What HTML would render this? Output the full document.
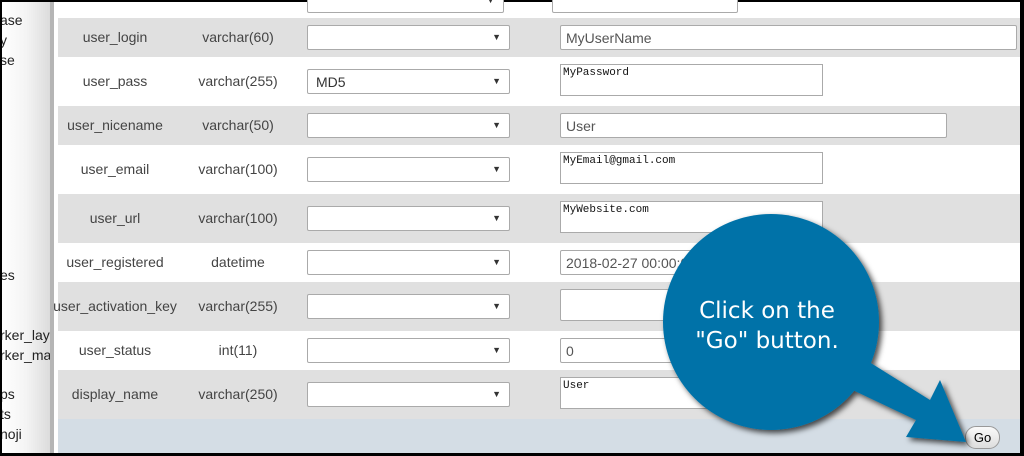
<!DOCTYPE html>
<html><head><style>
*{margin:0;padding:0;box-sizing:border-box}
body{width:1024px;height:456px;overflow:hidden;background:#000;position:relative;font-family:"Liberation Sans",Arial,sans-serif;font-size:14px;color:#444}
.a{position:absolute}
.side{left:2px;top:2px;width:48px;height:451px;background:linear-gradient(90deg,#fff 0%,#f4f4f4 50%,#dcdcdc 100%);overflow:hidden;font-size:14px;color:#222}
.side div{position:absolute;white-space:nowrap}
.bar{left:50px;top:2px;width:4px;height:451px;background:#b5b5b5}
.gap{left:54px;top:2px;width:4px;height:451px;background:#fff}
.main{left:58px;top:2px;width:962px;height:451px;background:#fff}
.row{position:absolute;left:58px;width:962px}
.g{background:#e0e0e0}
.lbl{position:absolute;width:120px;text-align:center;left:55px;color:#444}
.typ{position:absolute;width:120px;text-align:center;left:178px;color:#444}
.sel{position:absolute;left:307px;width:203px;height:25px;background:#fff;border:1px solid #aaa;border-radius:2px;font-size:14px;padding:4px 8px;color:#333}
.sel:after{content:"▼";position:absolute;right:8px;top:6px;font-size:9px;color:#333}
.in{position:absolute;left:560px;height:25px;background:#fff;border:1px solid #aaa;border-radius:2px;font-size:14px;padding:4px 5px;color:#555}
.ta{position:absolute;left:560px;width:263px;height:32px;background:#fff;border:1px solid #aaa;font-family:"Liberation Mono","DejaVu Sans Mono",monospace;font-size:11px;padding:2px 2px;color:#111}
.foot{left:58px;top:419px;width:962px;height:34px;background:#d4dde5}
.go{left:965px;top:426px;width:35px;height:23px;border:1px solid #999;border-radius:11px;background:linear-gradient(#fafafa,#ddd);font-size:13px;color:#000;text-align:center;line-height:21px}
</style></head><body>
<div class="a side">
<div style="left:-2px;top:10px">ase</div>
<div style="left:-2px;top:30px">y</div>
<div style="left:-2px;top:50px">se</div>
<div style="left:-2px;top:265px">es</div>
<div style="left:-2px;top:325px">rker_laye</div>
<div style="left:-2px;top:345px">rker_ma</div>
<div style="left:-2px;top:384px">ps</div>
<div style="left:-2px;top:404px">ts</div>
<div style="left:-2px;top:424px">noji</div>
</div>
<div class="a bar"></div><div class="a gap"></div>
<div class="a main"></div>
<div class="a sel" style="top:-12px;width:197px"></div>
<div class="a in" style="top:-12px;left:552px;width:186px"></div>

<div class="row g" style="top:18px;height:39px"></div>
<div class="lbl" style="top:29px">user_login</div><div class="typ" style="top:29px">varchar(60)</div>
<div class="sel" style="top:25px"></div><div class="in" style="top:25px;width:457px">MyUserName</div>

<div class="lbl" style="top:73px">user_pass</div><div class="typ" style="top:73px">varchar(255)</div>
<div class="sel" style="top:69px">MD5</div><div class="ta" style="top:64px">MyPassword</div>

<div class="row g" style="top:106px;height:39px"></div>
<div class="lbl" style="top:117px">user_nicename</div><div class="typ" style="top:117px">varchar(50)</div>
<div class="sel" style="top:113px"></div><div class="in" style="top:113px;width:387px">User</div>

<div class="lbl" style="top:161px">user_email</div><div class="typ" style="top:161px">varchar(100)</div>
<div class="sel" style="top:157px"></div><div class="ta" style="top:152px">MyEmail@gmail.com</div>

<div class="row g" style="top:194px;height:49px"></div>
<div class="lbl" style="top:210px">user_url</div><div class="typ" style="top:210px">varchar(100)</div>
<div class="sel" style="top:206px"></div><div class="ta" style="top:201px">MyWebsite.com</div>

<div class="lbl" style="top:254px">user_registered</div><div class="typ" style="top:254px">datetime</div>
<div class="sel" style="top:250px"></div><div class="in" style="top:250px;width:200px">2018-02-27 00:00:00</div>

<div class="row g" style="top:282px;height:49px"></div>
<div class="lbl" style="top:298px;left:52px;width:126px">user_activation_key</div><div class="typ" style="top:298px">varchar(255)</div>
<div class="sel" style="top:294px"></div><div class="in" style="top:289px;width:200px;height:32px"></div>

<div class="lbl" style="top:342px">user_status</div><div class="typ" style="top:342px">int(11)</div>
<div class="sel" style="top:338px"></div><div class="in" style="top:338px;width:200px">0</div>

<div class="row g" style="top:370px;height:49px"></div>
<div class="lbl" style="top:386px">display_name</div><div class="typ" style="top:386px">varchar(250)</div>
<div class="sel" style="top:382px"></div><div class="ta" style="top:377px">User</div>

<div class="a foot"></div>
<div class="a go">Go</div>

<svg class="a" style="left:0;top:0" width="1024" height="456">
<defs><filter id="s" x="-20%" y="-20%" width="140%" height="140%"><feDropShadow dx="3" dy="3" stdDeviation="3" flood-color="#000" flood-opacity="0.7"/></filter></defs>
<g filter="url(#s)" fill="#0072a8">
<circle cx="771" cy="322" r="108"/>
<polygon points="858,355 930,400 940,380 966,442 906,437 916,420 842,385"/>
</g>
<text x="767" y="318" fill="#fff" font-family="DejaVu Sans,sans-serif" font-size="23" text-anchor="middle">Click on the</text>
<text x="767" y="348" fill="#fff" font-family="DejaVu Sans,sans-serif" font-size="23" text-anchor="middle">"Go" button.</text>
</svg>
</body></html>
